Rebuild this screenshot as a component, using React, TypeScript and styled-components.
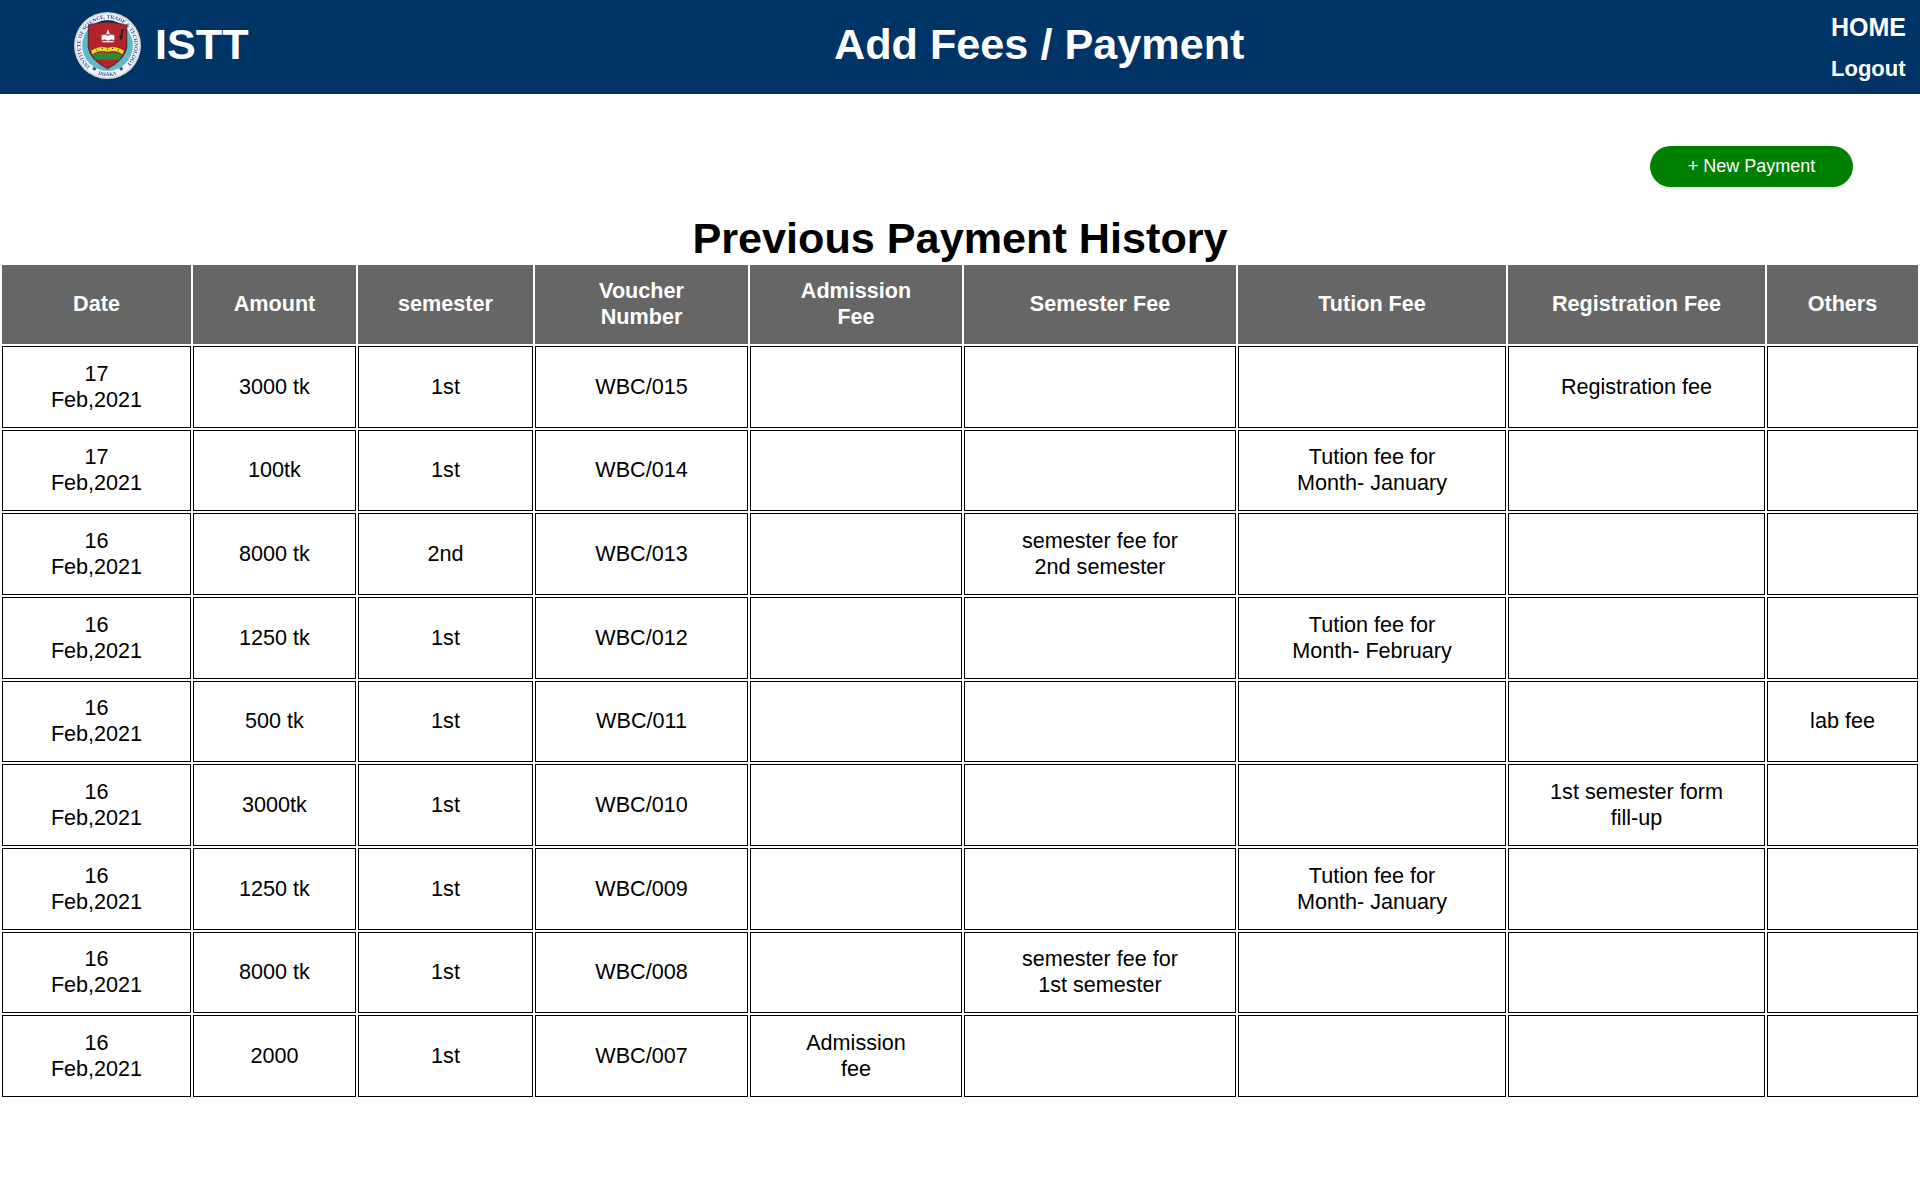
import React from "react";
import styled, { createGlobalStyle } from "styled-components";

const Global = createGlobalStyle`
  html, body { margin: 0; padding: 0; background: #fff; }
  body { font-family: "Liberation Sans", Arial, sans-serif; color: #000; }
`;

const Header = styled.header`
  height: 94px;
  background: #003366;
  display: grid;
  grid-template-columns: 834px auto 1fr;
  color: #fff;
`;
const Brand = styled.div`
  display: flex;
  align-items: center;
  padding: 0 0 5px 74px;
  gap: 14px;
`;
const BrandName = styled.span`
  font-size: 43.2px;
  font-weight: bold;
`;
const PageTitle = styled.h1`
  margin: 0;
  font-size: 43.2px;
  font-weight: bold;
  align-self: center;
  padding: 0 0 5px 0;
`;
const Nav = styled.nav`
  display: flex;
  flex-direction: column;
  align-items: flex-start;
  justify-self: end;
  padding: 13px 14px 0 0;
  gap: 15px;
`;
const NavLink = styled.a<{ $large?: boolean }>`
  font-size: ${(p) => (p.$large ? 25 : 22)}px;
  line-height: ${(p) => (p.$large ? 28 : 25)}px;
  font-weight: bold;
  color: #fff;
`;
const Actions = styled.div`
  display: flex;
  justify-content: flex-end;
  padding: 52px 67px 0 0;
`;
const NewButton = styled.button`
  width: 203px;
  height: 41px;
  border: none;
  border-radius: 21px;
  background: green;
  color: #fff;
  font-family: inherit;
  font-size: 18px;
  padding: 0;
`;
const Heading = styled.h2`
  margin: 26px 0 0;
  text-align: center;
  font-size: 43.2px;
  line-height: 50px;
  font-weight: bold;
`;
const Table = styled.table`
  width: 100%;
  border-collapse: separate;
  border-spacing: 2px;
  table-layout: fixed;
  font-size: 21.6px;
`;
const HeadCell = styled.th`
  background: #666666;
  color: #fff;
  font-weight: bold;
  text-align: center;
  height: 77px;
  padding: 0 0 2px;
  line-height: 26px;
  white-space: pre-line;
`;
const Cell = styled.td`
  border: 1px solid #000;
  text-align: center;
  height: 79.67px;
  padding: 0;
  line-height: 26px;
  white-space: pre-line;
`;
const LogoMark = styled.svg`
  width: 67px;
  height: 67px;
  flex: none;
  margin-top: 2px;
  filter: blur(0.35px);
`;

function Logo() {
  return (
    <LogoMark viewBox="0 0 66 66">
      <defs>
        <path id="ringTop" d="M15.9 53.4 A26.6 26.6 0 1 1 50.1 53.4" />
        <path id="ringBottom" d="M22.7 61.2 A30 30 0 0 0 43.3 61.2" />
      </defs>
      <circle cx="33" cy="33" r="33" fill="#cfdcd6" />
      <circle cx="33" cy="33" r="31.2" fill="#f1f4fa" />
      <text fontSize="5.2" fontWeight="bold" fill="#3f4a9a" fontFamily="Liberation Serif, serif">
        <textPath href="#ringTop" textLength="127" lengthAdjust="spacing">
          INSTITUTE OF SCIENCE, TRADE &amp; TECHNOLOGY
        </textPath>
      </text>
      <text fontSize="5" fontWeight="bold" fill="#3f4a9a" fontFamily="Liberation Serif, serif">
        <textPath href="#ringBottom" startOffset="50%" textAnchor="middle">
          DHAKA
        </textPath>
      </text>
      <circle cx="20" cy="56" r="1.7" fill="#3f4a9a" />
      <circle cx="46.5" cy="56" r="1.7" fill="#3f4a9a" />
      <circle cx="33" cy="33" r="25" fill="#5fb9c9" />
      <path d="M21 11.5 A25 25 0 0 1 45 11.5 Q33 7.5 21 11.5Z" fill="#111" />
      <path d="M14 13 Q33 7 52 13 L52 35 Q50 47 33 56 Q16 47 14 35Z" fill="#b5222a" stroke="#1a1a1a" strokeWidth="0.7" />
      <path d="M27 28 L27 23 Q30.5 21 33.5 23.5 Q36.5 21 40 23 L40 28 Q36.5 26.5 33.5 28.5 Q30.5 26.5 27 28Z" fill="#fff" stroke="#666" strokeWidth="0.5" />
      <path d="M31.5 22 L33.5 17 L35.5 22Z" fill="#f3f3f3" />
      <rect x="28" y="28.5" width="11" height="1.4" fill="#e8e8e8" />
      <path d="M46 18 L49.5 17 L48 20 L48 25 L45.5 28 L44.5 24 L46.5 22Z" fill="#222" />
      <path d="M16.5 38 Q25 32.5 33 35 Q41 32.5 49.5 38 L48 42 Q41 37 33 39.5 Q25 37 18 42Z" fill="#f4dc22" stroke="#222" strokeWidth="0.4" />
      <path d="M19 42 Q26 38.5 33 40.5 Q40 38.5 47 42 L45 47 L21 47Z" fill="#2b8a3e" />
      <circle cx="22.5" cy="37.5" r="0.6" fill="#111" />
      <circle cx="28" cy="35.8" r="0.6" fill="#111" />
      <circle cx="33" cy="37" r="0.6" fill="#111" />
      <circle cx="38" cy="35.8" r="0.6" fill="#111" />
      <circle cx="43.5" cy="37.5" r="0.6" fill="#111" />
    </LogoMark>
  );
}

const widths = [189, 163, 175, 213, 212, 272, 268, 257, 151];

const heads = ["Date", "Amount", "semester", "Voucher\nNumber", "Admission\nFee", "Semester Fee", "Tution Fee", "Registration Fee", "Others"];
type Row = [string, string, string, string, string, string, string, string, string];
const rows: Row[] = [
  ["17\nFeb,2021", "3000 tk", "1st", "WBC/015", "", "", "", "Registration fee", ""],
  ["17\nFeb,2021", "100tk", "1st", "WBC/014", "", "", "Tution fee for\nMonth- January", "", ""],
  ["16\nFeb,2021", "8000 tk", "2nd", "WBC/013", "", "semester fee for\n2nd semester", "", "", ""],
  ["16\nFeb,2021", "1250 tk", "1st", "WBC/012", "", "", "Tution fee for\nMonth- February", "", ""],
  ["16\nFeb,2021", "500 tk", "1st", "WBC/011", "", "", "", "", "lab fee"],
  ["16\nFeb,2021", "3000tk", "1st", "WBC/010", "", "", "", "1st semester form\nfill-up", ""],
  ["16\nFeb,2021", "1250 tk", "1st", "WBC/009", "", "", "Tution fee for\nMonth- January", "", ""],
  ["16\nFeb,2021", "8000 tk", "1st", "WBC/008", "", "semester fee for\n1st semester", "", "", ""],
  ["16\nFeb,2021", "2000", "1st", "WBC/007", "Admission\nfee", "", "", "", ""],
];

export default function App() {
  return (
    <>
      <Global />
      <Header>
        <Brand>
          <Logo />
          <BrandName>ISTT</BrandName>
        </Brand>
        <PageTitle>Add Fees / Payment</PageTitle>
        <Nav>
          <NavLink $large>HOME</NavLink>
          <NavLink>Logout</NavLink>
        </Nav>
      </Header>
      <Actions>
        <NewButton>+ New Payment</NewButton>
      </Actions>
      <Heading>Previous Payment History</Heading>
      <Table>
        <colgroup>
          {widths.map((w, i) => (
            <col key={i} style={{ width: w }} />
          ))}
        </colgroup>
        <thead>
          <tr>
            {heads.map((h) => (
              <HeadCell key={h}>{h}</HeadCell>
            ))}
          </tr>
        </thead>
        <tbody>
          {rows.map((r, i) => (
            <tr key={i}>
              {r.map((c, j) => (
                <Cell key={j}>{c}</Cell>
              ))}
            </tr>
          ))}
        </tbody>
      </Table>
    </>
  );
}
